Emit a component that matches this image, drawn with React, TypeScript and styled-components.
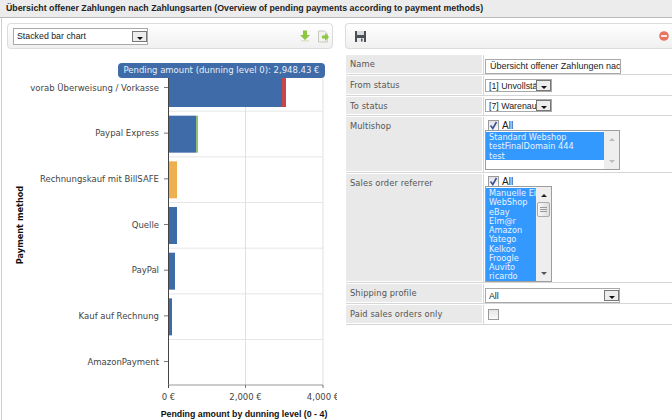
import React from "react";
import styled, { createGlobalStyle } from "styled-components";

const GlobalStyle = createGlobalStyle`
  html, body {
    margin: 0;
    padding: 0;
    background: #fff;
    overflow: hidden;
  }
  body {
    font-family: "DejaVu Sans", Verdana, sans-serif;
    font-size: 9px;
    color: #444;
  }
`;

const Page = styled.div`
  width: 672px;
  height: 420px;
  overflow: hidden;
  display: flex;
  flex-direction: column;
`;

const TitleBar = styled.div`
  height: 17px;
  line-height: 16px;
  padding-left: 6px;
  background: #ececec;
  border-bottom: 1px solid #b9b9b9;
  font-family: "Liberation Sans", Arial, sans-serif;
  font-weight: bold;
  font-size: 8.8px;
  color: #222;
  white-space: nowrap;
  flex: none;
`;

const Columns = styled.div`
  flex: 1;
  display: flex;
  min-height: 0;
`;

const LeftPanel = styled.div`
  width: 336px;
  flex: none;
  margin-left: 1px;
  border-left: 1px solid #cfcfcf;
  padding: 5px 0 0 5px;
  box-sizing: border-box;
  position: relative;
  overflow: hidden;
`;

const RightPanel = styled.div`
  flex: 1;
  padding: 5px 0 0 8px;
  min-width: 0;
`;

const Toolbar = styled.div`
  height: 24px;
  border: 1px solid #dcdcdc;
  border-radius: 4px;
  background: linear-gradient(#fff, #f0f0f0);
  display: flex;
  align-items: center;
  justify-content: space-between;
`;

const ChartToolbar = styled(Toolbar)`
  width: 326px;
  padding: 0 2px 0 5px;
  box-sizing: border-box;
  height: 26px;
`;

const FormToolbar = styled(Toolbar)`
  border-right: none;
  border-radius: 4px 0 0 4px;
  padding: 0 3px 0 8px;
`;

const IconGroup = styled.div`
  display: flex;
  gap: 6px;
  align-items: center;
`;

const SelectBox = styled.div<{ $width: number; $height?: number }>`
  width: ${(p) => p.$width}px;
  height: ${(p) => p.$height ?? 17}px;
  box-sizing: border-box;
  border: 1px solid #a9a9a9;
  background: #fff;
  display: flex;
  align-items: center;
  overflow: hidden;
  font-family: "Liberation Sans", Arial, sans-serif;
  font-size: 8.8px;
  color: #222;
  padding-left: 3px;
`;

const SelectText = styled.span`
  flex: 1;
  white-space: nowrap;
  overflow: hidden;
`;

const SelectArrow = styled.span`
  flex: none;
  width: 15px;
  height: 11px;
  box-sizing: border-box;
  border: 1px solid #777;
  background: #ededed;
  display: flex;
  align-items: flex-end;
  justify-content: center;
  padding-bottom: 1px;
  &::after {
    content: "";
    border-left: 3px solid transparent;
    border-right: 3px solid transparent;
    border-top: 3px solid #111;
  }
`;

const ChartWrap = styled.div`
  margin: 1px 0 0 -6px;
  flex: 1;
`;

const ChartSvg = styled.svg`
  display: block;
  font-family: "DejaVu Sans", Verdana, sans-serif;
  font-size: 8.5px;
`;

const Tip = styled.div`
  position: absolute;
  left: 116px;
  top: 45px;
  width: 207px;
  height: 15px;
  line-height: 14px;
  background: #3f6ca9;
  border-radius: 4px;
  color: #e8eef6;
  font-size: 8.5px;
  text-align: center;
  white-space: nowrap;
`;

const FormTable = styled.div`
  margin-top: 6px;
  display: flex;
  flex-direction: column;
  gap: 1px;
  margin-left: 1px;
`;

const Row = styled.div<{ $height: number }>`
  display: grid;
  grid-template-columns: 136px 1fr;
  gap: 1px;
  height: ${(p) => p.$height}px;
  box-sizing: border-box;
  border-bottom: 1px solid #d6d6d6;
`;

const Label = styled.div`
  background: #e9e9e9;
  padding: 3px 0 0 4px;
  font-size: 8.3px;
  line-height: 12px;
  color: #555;
  letter-spacing: 0.1px;
  margin-bottom: 1px;
`;

const Value = styled.div<{ $top?: number }>`
  padding: ${(p) => p.$top ?? 3}px 0 0 1px;
  border-left: 1px solid #d6d6d6;
  background: #fff;
`;

const TextInput = styled.div`
  width: 136px;
  height: 15px;
  box-sizing: border-box;
  border: 1px solid #a9a9a9;
  line-height: 13px;
  padding-left: 4px;
  font-family: "Liberation Sans", Arial, sans-serif;
  font-size: 9px;
  color: #222;
  white-space: nowrap;
  overflow: hidden;
`;

const CheckRow = styled.div<{ $height?: number }>`
  height: ${(p) => p.$height ?? 10}px;
  display: flex;
  align-items: center;
  gap: 3px;
  margin-left: 3px;
  font-family: "Liberation Sans", Arial, sans-serif;
  font-size: 10px;
  color: #222;
`;

const CheckBox = styled.span`
  width: 11px;
  height: 11px;
  box-sizing: border-box;
  border: 1px solid #9a9a9a;
  background: linear-gradient(#e4e4e4, #fafafa);
  display: flex;
  align-items: center;
  justify-content: center;
  flex: none;
`;

const ListBox = styled.div<{ $width: number; $height: number }>`
  width: ${(p) => p.$width}px;
  height: ${(p) => p.$height}px;
  box-sizing: border-box;
  border: 1px solid #9d9d9d;
  display: flex;
  background: #fff;
`;

const ListItems = styled.div`
  flex: 1;
  min-width: 0;
  overflow: hidden;
  padding-top: 1px;
`;

const ListItem = styled.div`
  height: 9.25px;
  line-height: 11px;
  padding-left: 3px;
  background: #3399ff;
  color: #e8f3ff;
  font-size: 8.2px;
  white-space: nowrap;
`;

const ScrollBar = styled.div`
  width: 15px;
  flex: none;
  background: #eee;
  display: flex;
  flex-direction: column;
  align-items: center;
  justify-content: space-between;
  padding: 7px 0 6px;
  box-sizing: border-box;
  position: relative;
`;

const ArrowUp = styled.span<{ $color?: string }>`
  border-left: 3px solid transparent;
  border-right: 3px solid transparent;
  border-bottom: 3px solid ${(p) => p.$color ?? "#bbb"};
`;

const ArrowDown = styled.span<{ $color?: string }>`
  border-left: 3px solid transparent;
  border-right: 3px solid transparent;
  border-top: 3px solid ${(p) => p.$color ?? "#bbb"};
`;

const Thumb = styled.span`
  position: absolute;
  left: 1px;
  top: 15px;
  width: 13px;
  height: 15px;
  box-sizing: border-box;
  border: 1px solid #aaa;
  border-radius: 2px;
  background: linear-gradient(90deg, #f7f7f7, #ddd);
  display: flex;
  flex-direction: column;
  justify-content: center;
  gap: 1px;
  padding: 0 2px;
  & > i {
    display: block;
    height: 1px;
    background: #999;
  }
`;

const categories = [
  { label: "vorab Überweisung / Vorkasse", segs: [{ w: 114, c: "#3f6ca9" }, { w: 4, c: "#c9474c" }] },
  { label: "Paypal Express", segs: [{ w: 28, c: "#3f6ca9" }, { w: 2, c: "#8cc177" }] },
  { label: "Rechnungskauf mit BillSAFE", segs: [{ w: 9, c: "#eeaf4e" }] },
  { label: "Quelle", segs: [{ w: 9, c: "#3f6ca9" }] },
  { label: "PayPal", segs: [{ w: 7, c: "#3f6ca9" }] },
  { label: "Kauf auf Rechnung", segs: [{ w: 4, c: "#3f6ca9" }] },
  { label: "AmazonPayment", segs: [] as { w: number; c: string }[] },
];

const PLOT_LEFT = 167;
const PLOT_TOP = 65.5;
const BAND = 45.67;
// svg starts below the chart toolbar, at y=50 of the page
const OFFSET_Y = 50;

const Chart = () => (
  <ChartSvg width={336} height={370} viewBox={`0 ${OFFSET_Y} 336 370`}>
    {[1, 2, 3, 4, 5, 6].map((i) => (
      <line
        key={i}
        x1={PLOT_LEFT}
        x2={322}
        y1={PLOT_TOP + i * BAND}
        y2={PLOT_TOP + i * BAND}
        stroke="#e6e6e6"
        strokeWidth={1}
      />
    ))}
    <line x1={244.5} x2={244.5} y1={PLOT_TOP} y2={385} stroke="#e0e0e0" />
    <line x1={322} x2={322} y1={PLOT_TOP} y2={385} stroke="#e0e0e0" />
    {categories.map((cat, i) => {
      const y = PLOT_TOP + i * BAND;
      let x = PLOT_LEFT;
      return (
        <g key={cat.label}>
          {cat.segs.map((s) => {
            const r = (
              <rect key={s.c} x={x} y={y + 4.5} width={s.w} height={37} fill={s.c} />
            );
            x += s.w;
            return r;
          })}
          <line x1={163} x2={167} y1={y + 22} y2={y + 22} stroke="#777" />
          <text x={158} y={y + 25} textAnchor="end" fill="#444">
            {cat.label}
          </text>
        </g>
      );
    })}
    <line x1={167.5} x2={167.5} y1={PLOT_TOP} y2={386} stroke="#444" />
    <line x1={167} x2={322} y1={385} y2={385} stroke="#999" />
    <line x1={244.5} x2={244.5} y1={385} y2={388} stroke="#777" />
    <line x1={322} x2={322} y1={385} y2={388} stroke="#777" />
    <line x1={167.5} x2={167.5} y1={385} y2={388} stroke="#444" />
    <text x={167.5} y={400} textAnchor="middle" fill="#444">0 €</text>
    <text x={244.5} y={400} textAnchor="middle" fill="#444">2,000 €</text>
    <text x={322} y={400} textAnchor="middle" fill="#444">4,000 €</text>
    <text
      x={243}
      y={417}
      textAnchor="middle"
      fontFamily="'Liberation Sans', Arial, sans-serif"
      fontSize={8.8}
      fontWeight="bold"
      fill="#111"
    >
      Pending amount by dunning level (0 - 4)
    </text>
    <text
      transform="translate(21.5 225) rotate(-90)"
      textAnchor="middle"
      fontSize={8.2}
      fontWeight="bold"
      fill="#111"
    >
      Payment method
    </text>
  </ChartSvg>
);

const Check = () => (
  <svg width="9" height="9" viewBox="0 0 9 9">
    <path d="M1.5 4.5 L3.8 7.5 L7.5 1" fill="none" stroke="#3c4f9c" strokeWidth="1.6" />
  </svg>
);

const SaveIcon = () => (
  <svg width="13" height="13" viewBox="0 0 13 13">
    <path d="M1 1h11v11H1z" fill="#4a5058" />
    <rect x="3" y="1" width="7" height="4" fill="#d8dadc" />
    <rect x="3" y="8" width="7" height="4" fill="#e8e8e8" />
    <rect x="7" y="8.5" width="1.5" height="3" fill="#4a5058" />
  </svg>
);

const MinusIcon = () => (
  <svg width="10" height="10" viewBox="0 0 10 10">
    <circle cx="5" cy="5" r="4.8" fill="#e8735f" />
    <rect x="2" y="4" width="6" height="2" fill="#fbe6e0" />
  </svg>
);

const DownloadIcon = () => (
  <svg width="12" height="12" viewBox="0 0 12 12">
    <path d="M4 0.5h4v4.5h3L6 10 1 5h3z" fill="#8ec63f" />
    <rect x="2" y="10" width="8" height="1.5" fill="#d9e4c8" />
  </svg>
);

const ExportIcon = () => (
  <svg width="13" height="13" viewBox="0 0 13 13">
    <path d="M1.5 1h6l3 3v8h-9z" fill="#f2f2ee" stroke="#c9c9c0" strokeWidth="1" />
    <path d="M5 5.5h3V3l4 4-4 4V8.5H5z" fill="#8ec63f" />
  </svg>
);

const shops = ["Standard Webshop", "testFinalDomain 444", "test"];
const referrers = [
  "Manuelle Eingabe",
  "WebShop",
  "eBay",
  "Elm@r",
  "Amazon",
  "Yatego",
  "Kelkoo",
  "Froogle",
  "Auvito",
  "ricardo",
];

export default function App() {
  return (
    <Page>
      <GlobalStyle />
      <TitleBar>
        Übersicht offener Zahlungen nach Zahlungsarten (Overview of pending payments according to payment methods)
      </TitleBar>
      <Columns>
        <LeftPanel>
          <ChartToolbar>
            <SelectBox $width={135}>
              <SelectText>Stacked bar chart</SelectText>
              <SelectArrow />
            </SelectBox>
            <IconGroup>
              <DownloadIcon />
              <ExportIcon />
            </IconGroup>
          </ChartToolbar>
          <ChartWrap>
            <Chart />
          </ChartWrap>
          <Tip>Pending amount (dunning level 0): 2,948.43 €</Tip>
        </LeftPanel>
        <RightPanel>
          <FormToolbar>
            <SaveIcon />
            <MinusIcon />
          </FormToolbar>
          <FormTable>
            <Row $height={20}>
              <Label>Name</Label>
              <Value $top={4}>
                <TextInput>Übersicht offener Zahlungen nach Zahlungsarten</TextInput>
              </Value>
            </Row>
            <Row $height={20}>
              <Label>From status</Label>
              <Value>
                <SelectBox $width={67} $height={13}>
                  <SelectText>[1] Unvollständig</SelectText>
                  <SelectArrow />
                </SelectBox>
              </Value>
            </Row>
            <Row $height={19}>
              <Label>To status</Label>
              <Value $top={2}>
                <SelectBox $width={67} $height={13}>
                  <SelectText>[7] Warenausgang</SelectText>
                  <SelectArrow />
                </SelectBox>
              </Value>
            </Row>
            <Row $height={56}>
              <Label>Multishop</Label>
              <Value>
                <CheckRow>
                  <CheckBox><Check /></CheckBox>
                  All
                </CheckRow>
                <ListBox $width={135} $height={40}>
                  <ListItems>
                    {shops.map((s) => (
                      <ListItem key={s}>{s}</ListItem>
                    ))}
                  </ListItems>
                  <ScrollBar>
                    <ArrowUp />
                    <ArrowDown />
                  </ScrollBar>
                </ListBox>
              </Value>
            </Row>
            <Row $height={109}>
              <Label>Sales order referrer</Label>
              <Value $top={2}>
                <CheckRow>
                  <CheckBox><Check /></CheckBox>
                  All
                </CheckRow>
                <ListBox $width={67} $height={96}>
                  <ListItems>
                    {referrers.map((s) => (
                      <ListItem key={s}>{s}</ListItem>
                    ))}
                  </ListItems>
                  <ScrollBar>
                    <ArrowUp $color="#222" />
                    <Thumb><i /><i /><i /></Thumb>
                    <ArrowDown $color="#555" />
                  </ScrollBar>
                </ListBox>
              </Value>
            </Row>
            <Row $height={20}>
              <Label>Shipping profile</Label>
              <Value $top={4}>
                <SelectBox $width={135} $height={15}>
                  <SelectText>All</SelectText>
                  <SelectArrow />
                </SelectBox>
              </Value>
            </Row>
            <Row $height={20}>
              <Label>Paid sales orders only</Label>
              <Value $top={4}>
                <CheckRow $height={11}>
                  <CheckBox />
                </CheckRow>
              </Value>
            </Row>
          </FormTable>
        </RightPanel>
      </Columns>
    </Page>
  );
}
